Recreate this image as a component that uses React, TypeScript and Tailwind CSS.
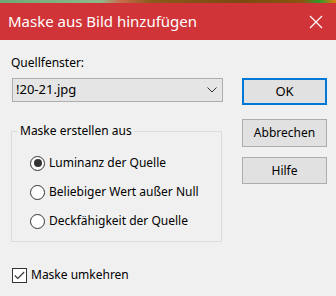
import React from "react";

export default function App() {
  const font = { fontFamily: '"Segoe UI", "Noto Sans", "Open Sans", sans-serif' };
  return (
    <div className="w-[336px] h-[296px] bg-[#f0f0f0] overflow-hidden text-[12px] text-black" style={font}>
      <div className="h-[3px] bg-[linear-gradient(90deg,#6fa874_0%,#8fb98a_30%,#c96a4a_36%,#8a5a1c_45%,#7a4a10_70%,#8a5410_90%,#2f9a2a_95%,#e07a10_100%)]" />
      <div className="h-[37px] bg-[#d13438] flex items-center justify-between pl-[8px] pr-[12px]">
        <span className="text-white text-[15px] leading-none">Maske aus Bild hinzufügen</span>
        <svg width="14" height="14" viewBox="0 0 14 14" className="mr-[1px]">
          <path d="M1 1 L13 13 M13 1 L1 13" stroke="white" strokeWidth="1.2" />
        </svg>
      </div>
      <div className="flex pl-[12px] pt-[15px]">
        <div className="w-[211px] flex flex-col">
          <div className="leading-[16px] h-[16px] -ml-[1px]">Quellfenster:</div>
          <div className="mt-[7px] h-[24px] bg-[#e5e5e5] border border-[#adadad] flex items-center justify-between pl-[3px] pr-[5px]">
            <span className="text-[13px]">!20-21.jpg</span>
            <svg width="10" height="6" viewBox="0 0 10 6">
              <path d="M0.5 0.5 L5 5 L9.5 0.5" stroke="#333" fill="none" strokeWidth="1" />
            </svg>
          </div>
          <div className="relative mt-[29px] h-[111px] border border-[#dcdcdc] -ml-[1px] w-[211px]">
            <span className="absolute -top-[9px] left-[6px] px-[2px] bg-[#f0f0f0] leading-[16px]">Maske erstellen aus</span>
            <div className="flex flex-col pl-[18px] pt-[23px] gap-[13px]">
              {["Luminanz der Quelle", "Beliebiger Wert außer Null", "Deckfähigkeit der Quelle"].map((t, i) => (
                <div key={t} className="flex items-center h-[16px]">
                  <span className="w-[15px] h-[15px] rounded-full border-[1.3px] border-[#333] bg-white flex items-center justify-center">
                    {i === 0 && <span className="w-[8px] h-[8px] rounded-full bg-[#333]" />}
                  </span>
                  <span className="ml-[4px]">{t}</span>
                </div>
              ))}
            </div>
          </div>
          <div className="mt-[24px] flex items-center">
            <span className="w-[15px] h-[15px] border border-[#333] bg-white flex items-center justify-center">
              <svg width="11" height="9" viewBox="0 0 11 9">
                <path d="M0.8 4.5 L3.8 7.5 L10.2 1" stroke="#333" fill="none" strokeWidth="1.1" />
              </svg>
            </span>
            <span className="ml-[4px]">Maske umkehren</span>
          </div>
        </div>
        <div className="ml-[19px] mt-[23px] flex flex-col w-[85px]">
          <button className="h-[27px] bg-[#e1e1e1] border-2 border-[#0078d7] text-[13px]">OK</button>
          <button className="mt-[14px] h-[28px] bg-[#e1e1e1] border border-[#adadad] text-[12px]">Abbrechen</button>
          <button className="mt-[10px] h-[27px] bg-[#e1e1e1] border border-[#adadad] text-[12px]">Hilfe</button>
        </div>
      </div>
    </div>
  );
}
